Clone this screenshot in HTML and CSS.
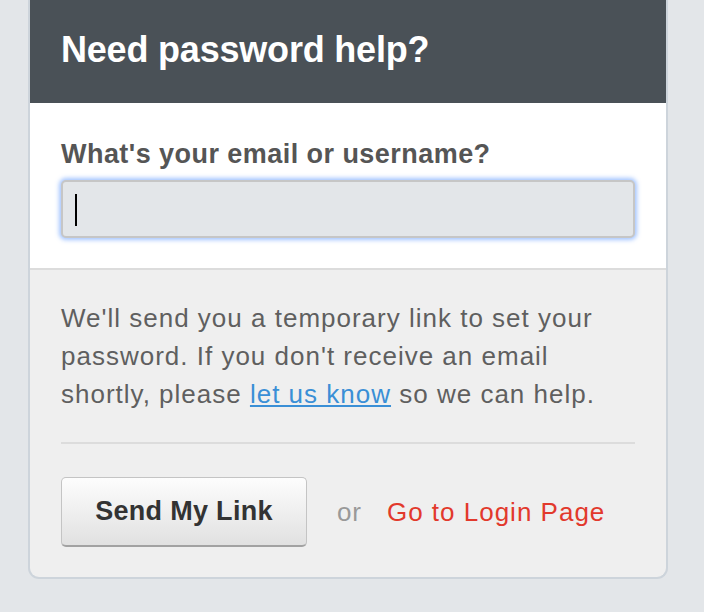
FILE: index.html
```html
<!DOCTYPE html>
<html lang="en">
<head>
<meta charset="utf-8">
<title>Need password help?</title>
<link rel="stylesheet" href="styles.css">
</head>
<body>
<div class="card">
  <div class="card-header">
    <h1 class="title">Need password help?</h1>
  </div>
  <div class="card-field">
    <label class="field-label" for="login">What's your email or username?</label>
    <div class="field-input" id="login" role="textbox"><span class="caret"></span></div>
  </div>
  <div class="card-footer">
    <p class="note">We'll send you a temporary link to set your password. If you don't receive an email shortly, please <a class="note-link" href="#">let us know</a> so we can help.</p>
    <hr class="divider">
    <div class="actions">
      <button class="btn" type="button">Send My Link</button>
      <span class="or">or</span>
      <a class="login-link" href="#">Go to Login Page</a>
    </div>
  </div>
</div>
</body>
</html>
```
FILE: styles.css
```css
* { box-sizing: border-box; }
html, body { margin: 0; padding: 0; }
body {
  background: #e3e6e9;
  font-family: "Liberation Sans", Arial, Helvetica, sans-serif;
  width: 704px;
  height: 612px;
  overflow: hidden;
}
.card {
  margin-left: 28px;
  width: 640px;
  border: 2px solid #cdd4db;
  border-top: 0;
  border-radius: 0 0 11px 11px;
  overflow: hidden;
  background: #efefef;
}
.card-header {
  background: #4a5157;
  height: 103px;
  padding: 28px 31px 0;
}
.title {
  margin: 0;
  color: #ffffff;
  font-size: 36px;
  line-height: 44px;
  font-weight: bold;
  letter-spacing: -0.2px;
}
.card-field {
  background: #ffffff;
  padding: 35px 31px 30px;
  border-bottom: 2px solid #dcdcdc;
}
.field-label {
  display: block;
  color: #555555;
  font-size: 27px;
  line-height: 32px;
  font-weight: bold;
  margin-bottom: 10px;
  letter-spacing: 0.45px;
}
.field-input {
  height: 58px;
  background: #e3e6e9;
  border: 2px solid #c6c6c6;
  border-radius: 5px;
  box-shadow: 0 0 4px 2px rgba(90, 150, 255, 0.55);
  padding: 12px 0 0 12px;
}
.caret {
  display: block;
  width: 2px;
  height: 32px;
  background: #000000;
}
.card-footer {
  padding: 29px 31px 30px;
}
.note {
  margin: 0;
  color: #5f5f5f;
  font-size: 26px;
  line-height: 38px;
  letter-spacing: 1px;
}
.note-link {
  color: #3a8fd6;
  text-decoration: underline;
}
.divider {
  margin: 29px 0 33px;
  border: 0;
  height: 2px;
  background: #dcdcdc;
}
.actions {
  display: flex;
  align-items: center;
}
.btn {
  width: 246px;
  height: 70px;
  border: 1px solid #c4c4c4;
  border-bottom: 2px solid #a2a2a2;
  border-radius: 5px;
  background: linear-gradient(#fdfdfd, #e1e1e1);
  color: #333333;
  font-family: "Liberation Sans", Arial, Helvetica, sans-serif;
  font-size: 27px;
  font-weight: bold;
  letter-spacing: 0.3px;
  padding: 0;
}
.or {
  margin-left: 30px;
  color: #999999;
  font-size: 26px;
  letter-spacing: 0.9px;
}
.login-link {
  margin-left: 25px;
  color: #e2392c;
  font-size: 26px;
  letter-spacing: 1px;
  text-decoration: none;
}
```
